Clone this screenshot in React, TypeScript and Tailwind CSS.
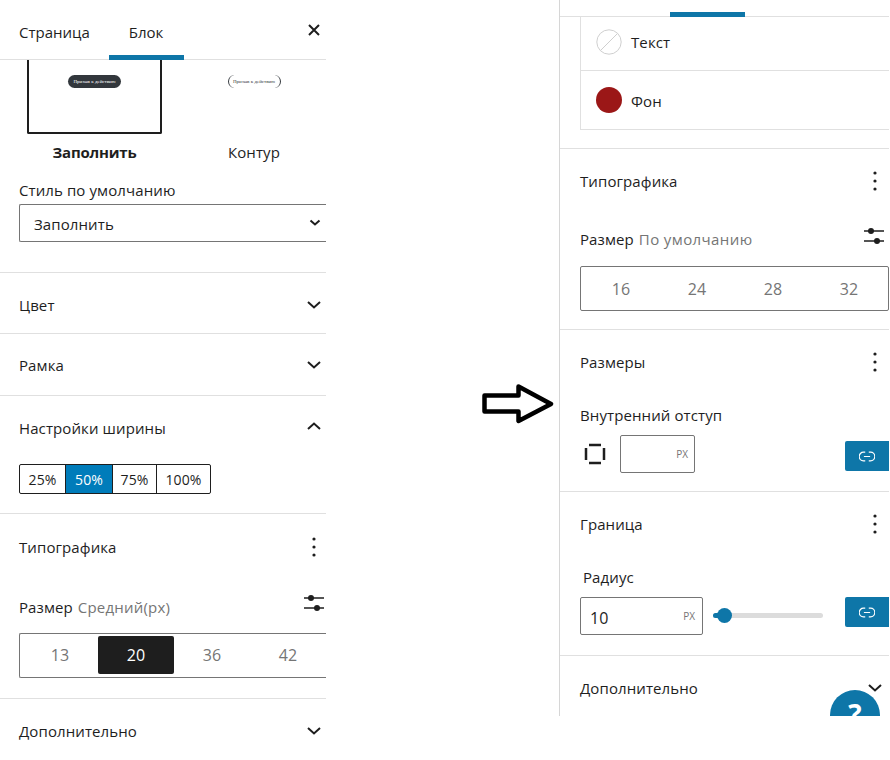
import React from "react";

const Chevron = ({ up = false }: { up?: boolean }) => (
  <svg width="16" height="10" viewBox="0 0 16 10" className={up ? "rotate-180" : ""}>
    <path d="M2 2 L8 7.5 L14 2" fill="none" stroke="#1e1e1e" strokeWidth="2" />
  </svg>
);

const Dots = () => (
  <svg width="4" height="20" viewBox="0 0 4 20">
    <circle cx="2" cy="2" r="1.6" fill="#1e1e1e" />
    <circle cx="2" cy="10" r="1.6" fill="#1e1e1e" />
    <circle cx="2" cy="18" r="1.6" fill="#1e1e1e" />
  </svg>
);

const Sliders = () => (
  <svg width="22" height="18" viewBox="0 0 22 18">
    <path d="M1 4 H21 M1 14 H21" stroke="#1e1e1e" strokeWidth="1.6" />
    <circle cx="8" cy="4" r="3" fill="#1e1e1e" />
    <circle cx="14" cy="14" r="3" fill="#1e1e1e" />
  </svg>
);

const LinkIcon = () => (
  <svg width="16" height="11" viewBox="0 0 18 12">
    <path
      d="M7 1.2 H5 a4.8 4.8 0 0 0 0 9.6 H7 M11 1.2 H13 a4.8 4.8 0 0 1 0 9.6 H11 M5.5 6 H12.5"
      fill="none"
      stroke="#ffffff"
      strokeWidth="1.4"
    />
  </svg>
);

const SegmentItems = ({ items, active }: { items: string[]; active?: string }) => (
  <>
    {items.map((t) => (
      <div
        key={t}
        className={
          t === active
            ? "flex h-[38px] w-[76px] items-center justify-center rounded-[2px] bg-[#1e1e1e] text-white"
            : "flex h-[38px] w-[76px] items-center justify-center text-[#757575]"
        }
      >
        {t}
      </div>
    ))}
  </>
);

const Widths = () => (
  <div className="flex h-[30px] w-[192px] rounded-[2px] border border-[#1e1e1e] pt-0 text-[14px] leading-none">
    <div className="flex w-[46px] items-center justify-center border-r border-[#1e1e1e] pt-[2px]">25%</div>
    <div className="flex w-[46px] items-center justify-center bg-[#007cba] pt-[2px] text-white">50%</div>
    <div className="flex w-[45px] items-center justify-center border-x border-[#1e1e1e] pt-[2px]">75%</div>
    <div className="flex flex-1 items-center justify-center pt-[2px]">100%</div>
  </div>
);

const Collapsed = ({ title, cls }: { title: string; cls: string }) => (
  <div className={`${cls} flex items-center justify-between border-b border-[#e0e0e0] pl-[19px] pr-[4px]`}>
    <span>{title}</span>
    <Chevron />
  </div>
);

const PanelHead = ({ title }: { title: string }) => (
  <div className="flex h-[20px] items-center justify-between">
    <span>{title}</span>
    <span className="mr-[2px] flex w-[20px] justify-center">
      <Dots />
    </span>
  </div>
);

export default function App() {
  return (
    <div
      className="flex h-[760px] w-[890px] overflow-hidden bg-white text-[15px] leading-[20px] tracking-[0.1px] text-[#1e1e1e]"
      style={{ fontFamily: '"Open Sans", "Noto Sans", sans-serif' }}
    >
      {/* left panel */}
      <div className="w-[326px] shrink-0">
        <div className="relative flex h-[60px] border-b border-[#e0e0e0] pl-[19px] pt-[22px]">
          <span className="tracking-normal">Страница</span>
          <span className="ml-[39px] tracking-normal">Блок</span>
          <div className="absolute bottom-[-1px] left-[109px] h-[5px] w-[75px] bg-[#0e76a8]" />
          <svg className="absolute left-[307px] top-[23px]" width="14" height="14" viewBox="0 0 14 14">
            <path d="M2 2 L12 12 M12 2 L2 12" stroke="#1e1e1e" strokeWidth="2" />
          </svg>
        </div>

        <div className="h-[213px] border-b border-[#e0e0e0]">
          <div className="flex pl-[27px]">
            <div className="flex h-[74px] w-[135px] justify-center rounded-b-[2px] border-x-2 border-b-2 border-[#1e1e1e] pt-[15px]">
              <div className="flex h-[13px] w-[53px] items-center justify-center whitespace-nowrap rounded-full bg-[#32373c] text-[5px] leading-none tracking-normal text-white" style={{ fontFamily: '"Liberation Serif", serif' }}>
                Призыв к действию
              </div>
            </div>
            <div className="ml-[27px] flex w-[130px] justify-center pt-[15px]">
              <div className="flex h-[13px] w-[53px] items-center justify-center whitespace-nowrap rounded-full border-x-[1.5px] border-[#32373c] text-[5px] leading-none tracking-normal text-[#32373c]" style={{ fontFamily: '"Liberation Serif", serif' }}>
                Призыв к действию
              </div>
            </div>
          </div>
          <div className="mt-[8px] flex pl-[27px]">
            <div className="w-[135px] text-center font-bold tracking-[-0.2px]">Заполнить</div>
            <div className="ml-[27px] w-[130px] text-center">Контур</div>
          </div>
          <div className="mt-[18px] pl-[19px]">Стиль по умолчанию</div>
          <div className="ml-[19px] mt-[4px] flex h-[38px] items-center justify-between rounded-l-[2px] border border-r-0 border-[#757575] pl-[14px] pr-[5px]">
            <span className="pt-[2px]">Заполнить</span>
            <svg width="12" height="8" viewBox="0 0 12 8">
              <path d="M1.5 1.5 L6 5.5 L10.5 1.5" fill="none" stroke="#1e1e1e" strokeWidth="2" />
            </svg>
          </div>
        </div>

        <Collapsed title="Цвет" cls="h-[61px] pt-[3px]" />
        <Collapsed title="Рамка" cls="h-[62px] pt-[1px]" />

        <div className="h-[118px] border-b border-[#e0e0e0] pl-[19px] pr-[4px] pt-[22px]">
          <div className="flex h-[20px] items-center justify-between">
            <span>Настройки ширины</span>
            <span className="-mt-[4px]">
              <Chevron up />
            </span>
          </div>
          <div className="mt-[26px]">
            <Widths />
          </div>
        </div>

        <div className="h-[185px] border-b border-[#e0e0e0] pl-[19px] pt-[23px]">
          <PanelHead title="Типографика" />
          <div className="mt-[40px] flex h-[20px] items-center justify-between">
            <span>
              Размер <span className="ml-[1px] tracking-[0.2px] text-[#757575]">Средний(px)</span>
            </span>
            <span className="-mt-[8px] mr-[1px]">
              <Sliders />
            </span>
          </div>
          <div className="mt-[16px] flex h-[45px] items-center rounded-l-[2px] border border-r-0 border-[#757575] pb-[1px] pl-[2px] text-[16px]">
            <SegmentItems items={["13", "20", "36", "42"]} active="20" />
          </div>
        </div>
        <Collapsed title="Дополнительно" cls="h-[64px]" />
      </div>

      {/* arrow */}
      <div className="w-[233px] shrink-0 pl-[156px] pt-[384px]">
        <svg width="74" height="40" viewBox="0 0 74 40">
          <path d="M2.5 11.5 H36.5 V2.5 L69 20 L36.5 37 V27.5 H2.5 Z" fill="none" stroke="#000" strokeWidth="4.5" strokeLinejoin="round" />
        </svg>
      </div>

      {/* right panel */}
      <div className="relative h-[716px] w-[330px] shrink-0 overflow-hidden border-l border-[#d6d6d6]">
        <div className="relative h-[17px] border-b border-[#e0e0e0]">
          <div className="absolute bottom-[-1px] left-[110px] h-[5px] w-[75px] bg-[#0e76a8]" />
        </div>
        <div className="h-[132px] border-b border-[#e0e0e0] pl-[20px]">
          <div className="h-[113px] border-b border-l border-[#e0e0e0]">
            <div className="flex h-[54px] items-center gap-[9px] border-b border-[#e0e0e0] pb-[3px] pl-[15px]">
              <svg width="26" height="26" viewBox="0 0 26 26">
                <circle cx="13" cy="13" r="12.2" fill="#fff" stroke="#cfcfcf" />
                <path d="M4.5 21.5 L21.5 4.5" stroke="#cfcfcf" />
              </svg>
              <span>Текст</span>
            </div>
            <div className="flex h-[58px] items-center gap-[9px] pl-[15px]">
              <div className="h-[26px] w-[26px] rounded-full bg-[#9b1717]" />
              <span className="pt-[1px]">Фон</span>
            </div>
          </div>
        </div>

        <div className="h-[181px] border-b border-[#e0e0e0] pl-[20px] pt-[22px]">
          <div className="pr-[2px]">
            <PanelHead title="Типографика" />
          </div>
          <div className="mt-[38px] flex h-[20px] items-center justify-between pr-[4px]">
            <span>
              Размер <span className="ml-[1px] tracking-[0.4px] text-[#757575]">По умолчанию</span>
            </span>
            <span className="-mt-[6px]">
              <Sliders />
            </span>
          </div>
          <div className="mt-[17px] flex h-[45px] items-center rounded-[2px] border border-[#757575] pl-[2px] text-[16px]">
            <SegmentItems items={["16", "24", "28", "32"]} />
          </div>
        </div>

        <div className="h-[162px] border-b border-[#e0e0e0] pl-[20px] pt-[22px]">
          <div className="pr-[2px]">
            <PanelHead title="Размеры" />
          </div>
          <div className="mt-[33px]">Внутренний отступ</div>
          <div className="mt-[10px] flex items-center">
            <svg width="24" height="24" viewBox="0 0 24 24" className="ml-[3px]">
              <path d="M6 3 H18 M6 21 H18 M3 6 V18 M21 6 V18" stroke="#1e1e1e" strokeWidth="2.5" />
            </svg>
            <div className="ml-[13px] flex h-[38px] w-[75px] items-center justify-end rounded-[2px] border border-[#757575] pr-[6px] text-[10px] tracking-normal text-[#757575]">
              PX
            </div>
            <div className="ml-auto mt-[4px] flex h-[30px] w-[44px] items-center justify-center rounded-l-[2px] bg-[#0e76a8]">
              <LinkIcon />
            </div>
          </div>
        </div>

        <div className="h-[164px] border-b border-[#e0e0e0] pl-[20px] pt-[22px]">
          <div className="pr-[2px]">
            <PanelHead title="Граница" />
          </div>
          <div className="ml-[3px] mt-[33px]">Радиус</div>
          <div className="mt-[10px] flex">
            <div className="flex h-[38px] w-[123px] items-center justify-between rounded-[2px] border border-[#757575] pl-[9px] pr-[7px] text-[16px]">
              <span className="pt-[3px]">10</span>
              <span className="text-[10px] tracking-normal text-[#757575]">PX</span>
            </div>
            <div className="relative ml-[10px] mt-[16px] h-[5px] w-[110px] rounded-full bg-[#dcdcdc]">
              <div className="absolute left-0 top-0 h-[5px] w-[8px] rounded-l-full bg-[#0e76a8]" />
              <div className="absolute left-[4px] top-[-5px] h-[15px] w-[15px] rounded-full bg-[#0e76a8]" />
            </div>
            <div className="ml-auto flex h-[30px] w-[44px] items-center justify-center rounded-l-[2px] bg-[#0e76a8]">
              <LinkIcon />
            </div>
          </div>
        </div>

        <div className="flex items-center justify-between pl-[20px] pr-[6px] pt-[22px]">
          <span>Дополнительно</span>
          <Chevron />
        </div>

        <div className="absolute left-[270px] top-[690px] flex h-[50px] w-[50px] justify-center rounded-full bg-[#0e76a8] pt-[8px] text-[28px] font-bold leading-[32px] text-white">
          ?
        </div>
      </div>
    </div>
  );
}
